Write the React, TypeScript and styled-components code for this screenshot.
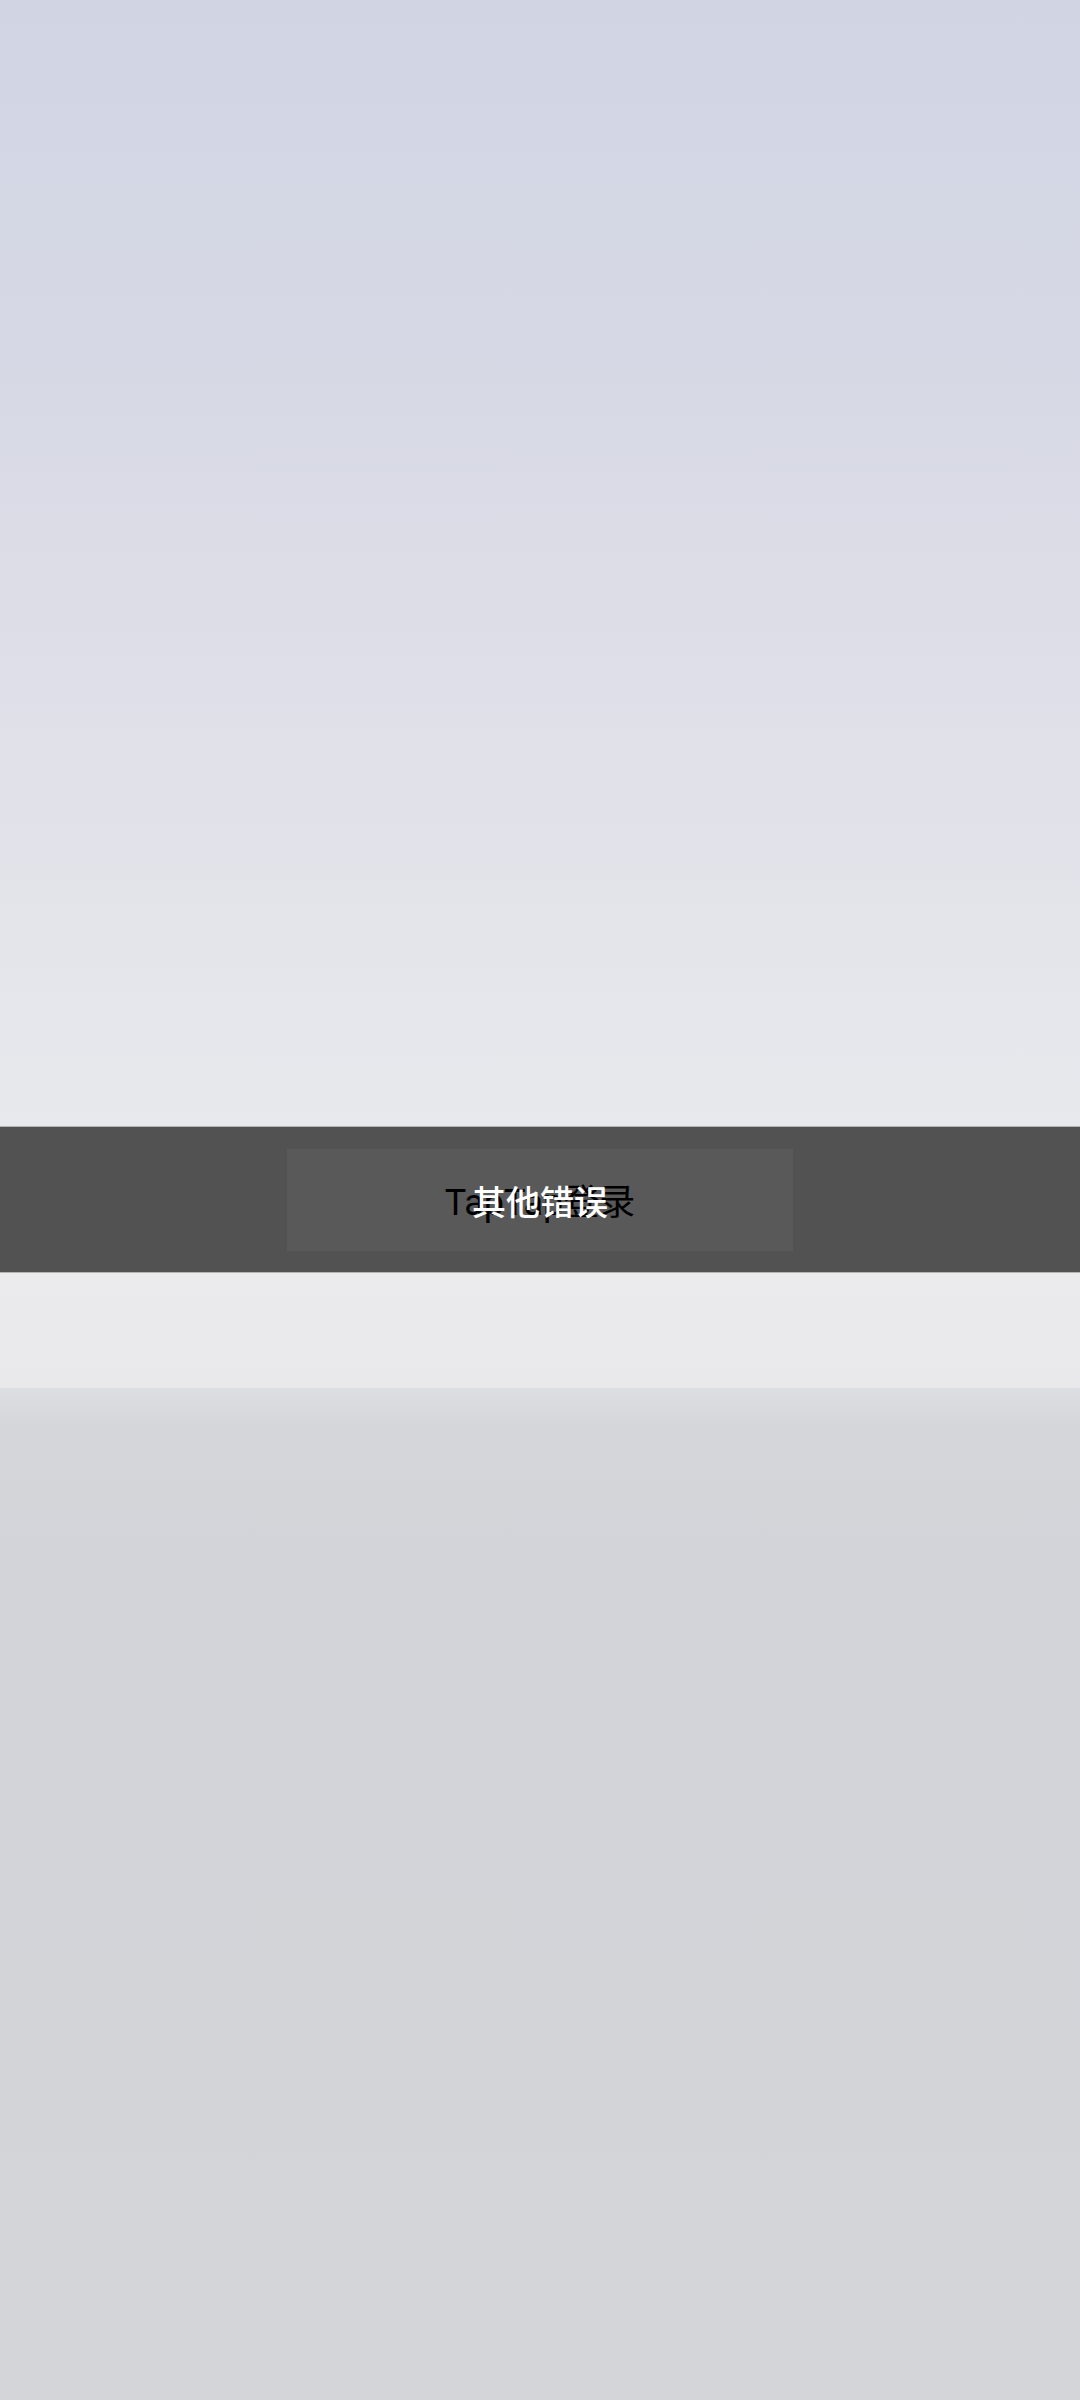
import styled, { createGlobalStyle } from 'styled-components';

const GlobalStyle = createGlobalStyle`
  html, body {
    margin: 0;
    padding: 0;
  }
  body {
    font-family: Roboto, 'Noto Sans CJK SC', sans-serif;
  }
`;

const Page = styled.div`
  width: 1080px;
  height: 2400px;
  display: flex;
  flex-direction: column;
  overflow: hidden;
`;

const Backdrop = styled.div`
  height: 1126px;
  background: linear-gradient(180deg, #d1d5e3 0%, #d7d9e5 36%, #e1e2e9 71%, #e8e9ed 100%);
`;

const ToastBand = styled.div`
  height: 145px;
  background: #525252;
  border-top: 1px solid #b4b4b4;
  border-bottom: 1px solid #b4b4b4;
  display: flex;
  justify-content: center;
  align-items: center;
`;

const ToastBox = styled.div`
  width: 506px;
  height: 102px;
  box-sizing: border-box;
  padding-top: 6px;
  background: #595959;
  display: grid;
  place-items: center;
`;

const Label = styled.span<{ $light?: boolean }>`
  grid-area: 1 / 1;
  font-size: ${({ $light }) => ($light ? 34 : 36)}px;
  line-height: 1;
  font-weight: ${({ $light }) => ($light ? 500 : 400)};
  color: ${({ $light }) => ($light ? '#ffffff' : '#000000')};
  white-space: nowrap;
`;

const Strip = styled.div`
  height: 115px;
  background: linear-gradient(180deg, #ebebee 0%, #e9e9ec 100%);
`;

const Lower = styled.div`
  flex: 1;
  background: linear-gradient(180deg, #dddee2 0px, #d5d6da 40px, #d3d4d9 200px, #d4d5d9 100%);
`;

export default function App() {
  return (
    <>
      <GlobalStyle />
      <Page>
        <Backdrop />
        <ToastBand>
          <ToastBox>
            <Label>TapTap登录</Label>
            <Label $light>其他错误</Label>
          </ToastBox>
        </ToastBand>
        <Strip />
        <Lower />
      </Page>
    </>
  );
}
